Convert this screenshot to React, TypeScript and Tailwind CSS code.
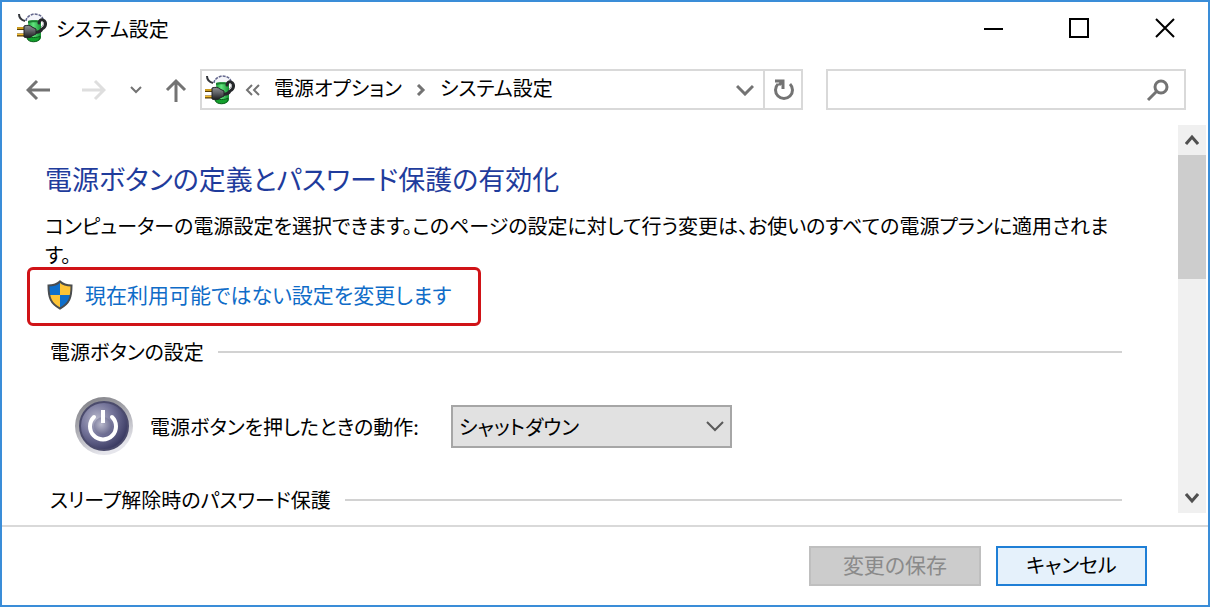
import type { ReactNode } from "react";

// Battery with a power cord, used in the title bar and the address bar.
function PowerOptionsIcon() {
  return (
    <svg viewBox="0 0 32 32" className="h-8 w-8 shrink-0" aria-hidden="true">
      <defs>
        <linearGradient id="cell" x1="0" x2="1" y1="0" y2="0">
          <stop offset="0" stopColor="#1f9a3a" />
          <stop offset="0.4" stopColor="#63e57f" />
          <stop offset="1" stopColor="#159132" />
        </linearGradient>
        <linearGradient id="plug" x1="0" x2="0" y1="0" y2="1">
          <stop offset="0" stopColor="#8f9194" />
          <stop offset="0.4" stopColor="#66686c" />
          <stop offset="1" stopColor="#1d1e20" />
        </linearGradient>
      </defs>
      <path d="M10 9c0-3 3-6 8-7 6 0 9 3 9 6" fill="#f4f5fa" stroke="#63668c" strokeWidth="1.5" strokeDasharray="3 1" />
      <path d="M12 9c2-1 10-1 13 0v16c0 6-12 6-12 0z" fill="url(#cell)" />
      <path d="M12 9c2-1 10-1 13 0v2c-3-1-10-1-13 0z" fill="#1a7f30" />
      <path d="M11 24c2 2 11 2 13 0v2c-1 5-12 5-13 0z" fill="#12a02c" stroke="#0a5a18" strokeWidth="1" />
      <path d="M3 2c0 4 2 6 6 7" fill="none" stroke="#34373c" strokeWidth="2" />
      <path d="M18 20c5 1 7-1 8-3 4-2 5-7 1-9-2-1-4 1-4 3" fill="none" stroke="#26282b" strokeWidth="3" strokeLinecap="round" />
      <path d="M27 10c1 2 0 4-2 5" fill="none" stroke="#9a9ca0" strokeWidth="1" />
      <path d="M1 16.500h8M1 23h8" stroke="#5a3d00" strokeWidth="3" />
      <path d="M1 16h7M1 22.500h7" stroke="#f3bd2d" strokeWidth="1.600" />
      <path d="M8 14c3-1 6-1 8 1l4 2v5l-4 2c-2 2-5 2-8 1z" fill="url(#plug)" stroke="#222427" strokeWidth="1" />
    </svg>
  );
}

function ShieldIcon() {
  return (
    <svg viewBox="0 0 26 30" className="h-[30px] w-[26px] shrink-0" aria-hidden="true">
      <defs>
        <clipPath id="shield">
          <path d="M13 1c3 3 7 4 12 4 0 12-2 19-12 24C3 24 1 17 1 5c5 0 9-1 12-4z" />
        </clipPath>
      </defs>
      <g clipPath="url(#shield)">
        <path d="M0 0h13v15H0z" fill="#0f6fcb" />
        <path d="M13 0h13v15H13z" fill="#fdc437" />
        <path d="M0 15h13v15H0z" fill="#fdc437" />
        <path d="M13 15h13v15H13z" fill="#0f6fcb" />
      </g>
      <path d="M13 1.500c3 3 7 4 11.500 4 0 12-2 18-11.500 23C3.500 23.500 1.500 17.500 1.500 5.500c4.500 0 8.500-1 11.500-4z" fill="none" stroke="#4a4d50" strokeWidth="2" />
    </svg>
  );
}

function PowerButtonIcon() {
  return (
    <svg viewBox="0 0 60 60" className="h-[60px] w-[60px] shrink-0" aria-hidden="true">
      <defs>
        <linearGradient id="rim" x1="0" x2="0.400" y1="0" y2="1">
          <stop offset="0" stopColor="#7b7b80" />
          <stop offset="0.500" stopColor="#a9a9b0" />
          <stop offset="1" stopColor="#e6e6ec" />
        </linearGradient>
        <radialGradient id="face" cx="0.35" cy="0.35" r="0.7">
          <stop offset="0" stopColor="#b4b4c8" />
          <stop offset="0.500" stopColor="#74749a" />
          <stop offset="1" stopColor="#37375f" />
        </radialGradient>
        <radialGradient id="knob" cx="0.4" cy="0.4" r="0.6">
          <stop offset="0" stopColor="#b9b9cc" />
          <stop offset="1" stopColor="#6c6c90" />
        </radialGradient>
      </defs>
      <circle cx="30" cy="30" r="29" fill="url(#rim)" />
      <circle cx="30" cy="30" r="24" fill="url(#face)" stroke="#4b4b6c" strokeWidth="2" />
      <circle cx="29" cy="30" r="9" fill="url(#knob)" />
      <path d="M20 21a13 13 0 1 0 18 0" fill="none" stroke="#fff" strokeWidth="4" strokeLinecap="round" />
      <path d="M29 14v13" stroke="#fff" strokeWidth="4" />
    </svg>
  );
}

interface GlyphProps {
  d: string;
  className: string;
  viewBox?: string;
  stroke?: number;
}

function Glyph({ d, className, viewBox = "0 0 24 24", stroke = 3 }: GlyphProps) {
  return (
    <svg viewBox={viewBox} className={`shrink-0 ${className}`} fill="none" stroke="currentColor" strokeWidth={stroke} aria-hidden="true">
      <path d={d} />
    </svg>
  );
}

function CaptionButton({ label, d }: { label: string; d: string }) {
  return (
    <button type="button" aria-label={label} className="flex w-[86px] items-center justify-center text-black">
      <Glyph d={d} stroke={2} className="h-6 w-6" />
    </button>
  );
}

function SectionTitle({ children }: { children: ReactNode }) {
  return (
    <div className="flex items-center gap-[14px]">
      <h2 className="leading-6">{children}</h2>
      <div className="h-[2px] flex-1 bg-[#d2d2d2]" />
    </div>
  );
}

function TitleBar() {
  return (
    <header className="flex h-[52px]">
      <div className="flex flex-1 items-center gap-2 pl-[14px]">
        <PowerOptionsIcon />
        <h1>システム設定</h1>
      </div>
      <CaptionButton label="最小化" d="M3 13h19" />
      <CaptionButton label="最大化" d="M3 3h18v18H3z" />
      <CaptionButton label="閉じる" d="M3 3l18 18M21 3L3 21" />
    </header>
  );
}

function NavBar() {
  return (
    <nav className="flex h-[41px] items-stretch pr-[22px] pl-6 text-[#737373]">
      <button type="button" aria-label="戻る" className="mr-8">
        <Glyph d="M24 12H3M11 3l-9 9 9 9" className="h-6 w-6" />
      </button>
      <button type="button" aria-label="進む" disabled className="mr-6 text-[#dedede]">
        <Glyph d="M0 12h21M13 3l9 9-9 9" className="h-6 w-6" />
      </button>
      <button type="button" aria-label="最近表示した場所" className="mr-[22px]">
        <Glyph d="M1 2l5 5 5-5" viewBox="0 0 12 10" stroke={2} className="h-[10px] w-3" />
      </button>
      <button type="button" aria-label="上へ" className="mr-3">
        <Glyph d="M12 24V3M3 12l9-9 9 9" className="h-6 w-6" />
      </button>

      <div className="grid min-w-0 flex-1 grid-cols-[603fr_360fr] gap-[23px]">
        <div className="flex min-w-0 border-2 border-[#d9d9d9]">
          <div className="flex min-w-0 flex-1 items-center pl-[2px]">
            <PowerOptionsIcon />
            <Glyph d="M8 1L3 6l5 5M15 1l-5 5 5 5" viewBox="0 0 16 12" stroke={2} className="ml-2 h-3 w-4" />
            <a href="#power" className="ml-[14px] pb-1 text-black">電源オプション</a>
            <Glyph d="M2 1l5 5-5 5" viewBox="0 0 10 12" className="mx-[14px] h-3 w-[10px]" />
            <a href="#system" className="pb-1 text-black">システム設定</a>
          </div>
          <button type="button" aria-label="以前の場所" className="flex w-9 items-center justify-center">
            <Glyph d="M1 2l8 8 8-8" viewBox="0 0 18 12" className="h-3 w-[18px]" />
          </button>
          <button type="button" aria-label="更新" className="flex w-[38px] items-center justify-center border-l-2 border-[#d9d9d9]">
            <Glyph d="M19 6a8.500 8.500 0 1 1-12 0M4 3h8v8M12 3L8 7" className="h-6 w-6" />
          </button>
        </div>

        <label className="flex min-w-0 items-center border-2 border-[#d9d9d9] pr-[14px]">
          <input type="text" aria-label="検索" className="min-w-0 flex-1 px-2 text-black outline-none" />
          <svg viewBox="0 0 24 24" className="h-6 w-6 shrink-0" fill="none" stroke="currentColor" strokeWidth="3" aria-hidden="true">
            <circle cx="15" cy="9" r="6" />
            <path d="M11 13l-9 9" />
          </svg>
        </label>
      </div>
    </nav>
  );
}

function ScrollBar() {
  return (
    <div className="flex w-7 shrink-0 flex-col items-center bg-[#f0f0f0] text-[#505050]" aria-hidden="true">
      <div className="flex h-[30px] items-center">
        <Glyph d="M1 10l6-7 6 7" viewBox="0 0 14 12" className="h-3 w-[14px]" />
      </div>
      <div className="h-[124px] w-full bg-[#cdcdcd]" />
      <div className="flex-1" />
      <div className="flex h-[30px] items-center">
        <Glyph d="M1 2l6 7 6-7" viewBox="0 0 14 12" className="h-3 w-[14px]" />
      </div>
    </div>
  );
}

export default function App() {
  return (
    <div className="flex min-h-screen flex-col border-2 border-[#3a8dd8] bg-white font-['Noto_Sans_CJK_JP',sans-serif] text-[20px] leading-[29px] text-black [font-feature-settings:'palt']">
      <TitleBar />
      <div className="pt-[15px]">
        <NavBar />
      </div>

      <div className="mt-[15px] flex flex-1 pr-[2px]">
        <main className="min-w-0 flex-1 pr-14 pl-[25px]">
          <div className="pt-[34px] pl-[18px]">
            <h2 className="text-[27px] leading-10 text-[#1f3c9c]">電源ボタンの定義とパスワード保護の有効化</h2>
            <p className="mt-3">
              コンピューターの電源設定を選択できます。このページの設定に対して行う変更は、お使いのすべての電源プランに適用されます。
            </p>
          </div>

          <a href="#change" className="-mt-[2px] flex h-[59px] w-[454px] items-center gap-3 rounded-md border-3 border-[#d01317] pb-1 pl-[17px] text-[21px] text-[#0f6cc8]">
            <ShieldIcon />
            現在利用可能ではない設定を変更します
          </a>

          <section className="pt-[14px] pl-[23px]">
            <SectionTitle>電源ボタンの設定</SectionTitle>
            <div className="flex items-center py-8 pl-6">
              <PowerButtonIcon />
              <label htmlFor="power-action" className="ml-4 w-[301px]">
                電源ボタンを押したときの動作:
              </label>
              <div className="relative w-[281px]">
                <select id="power-action" className="h-[43px] w-full appearance-none border-2 border-[#a6a6a6] bg-[#e1e1e1] pl-[6px]">
                  <option>シャットダウン</option>
                </select>
                <div className="pointer-events-none absolute inset-y-0 right-2 flex items-center text-[#5a5a5a]">
                  <Glyph d="M1 2l8 8 8-8" viewBox="0 0 18 12" stroke={2} className="h-3 w-[18px]" />
                </div>
              </div>
            </div>
          </section>

          <section className="pl-[23px]">
            <SectionTitle>スリープ解除時のパスワード保護</SectionTitle>
          </section>
        </main>
        <ScrollBar />
      </div>

      <footer className="mt-3 flex justify-end gap-[15px] border-t-2 border-[#d9d9d9] py-[19px] pr-[61px]">
        <button type="button" disabled className="h-10 w-[172px] border-2 border-[#bfbfbf] bg-[#cccccc] pb-1 text-[21px] text-[#8a8a8a]">
          変更の保存
        </button>
        <button type="button" className="h-10 w-[151px] border-2 border-[#1f7fd6] bg-[#e5f1fb] pb-1">
          キャンセル
        </button>
      </footer>
    </div>
  );
}
